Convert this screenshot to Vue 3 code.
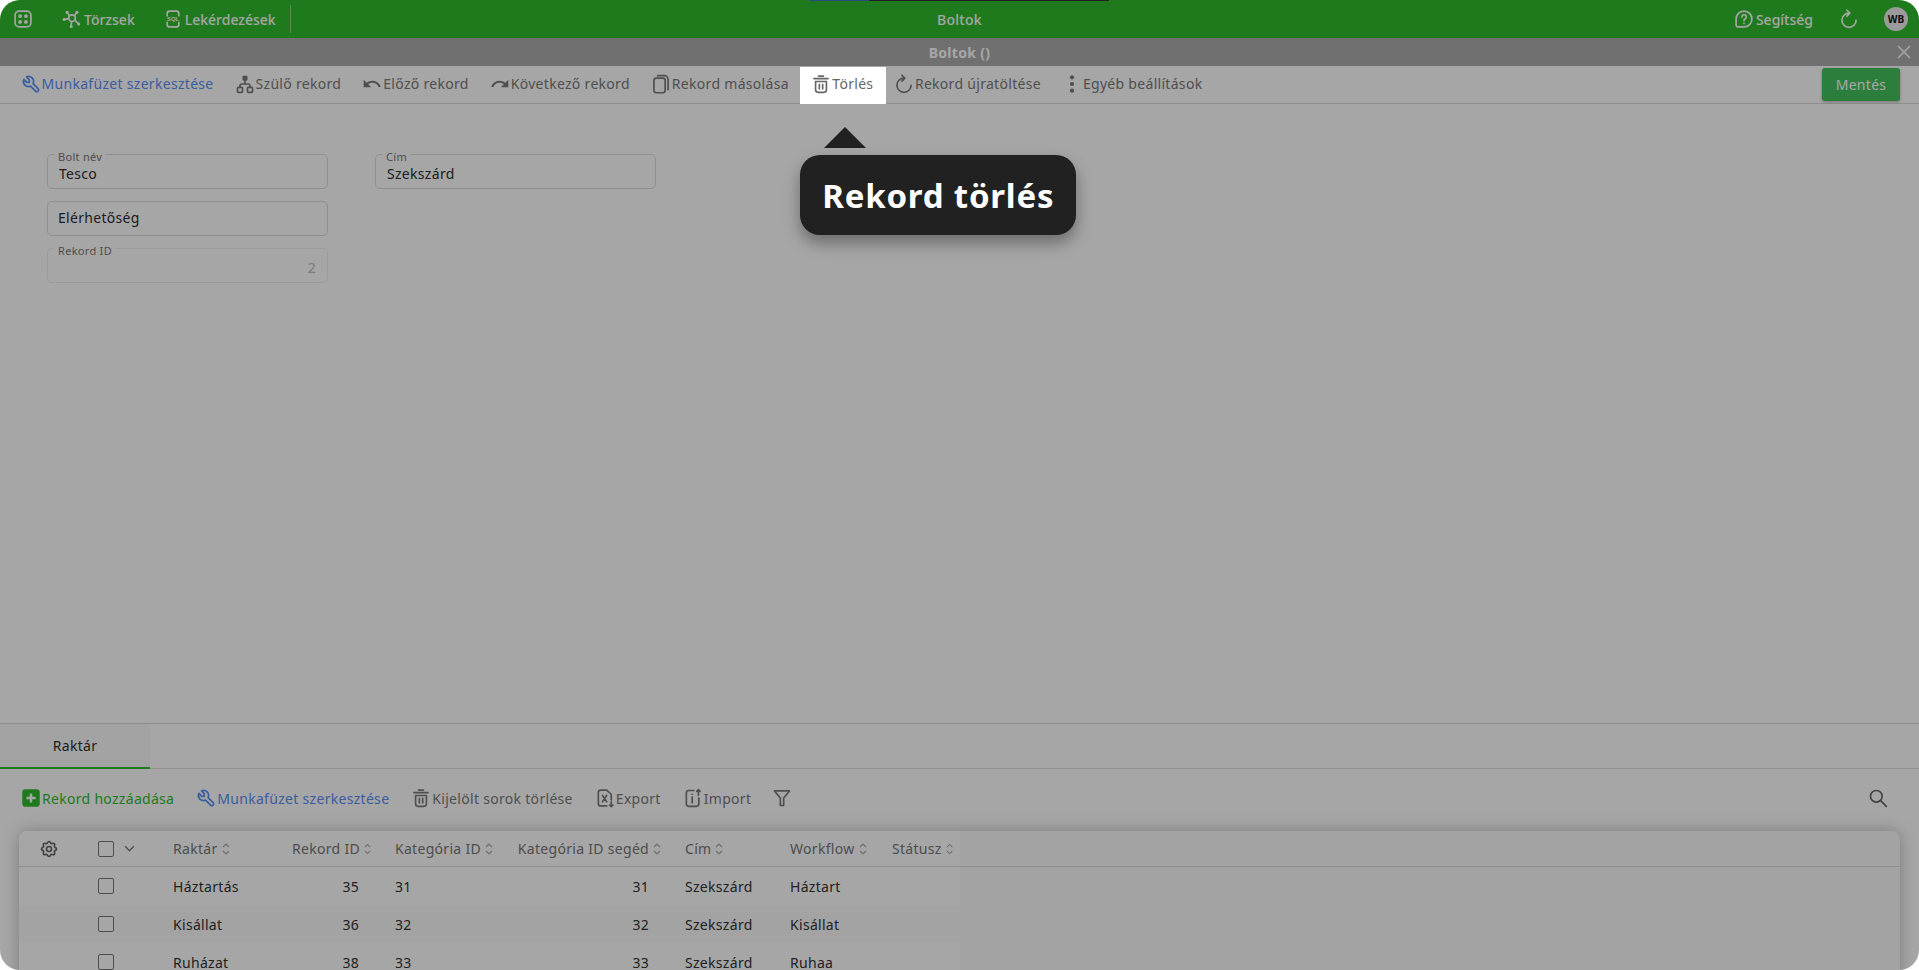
<template>
  <div class="app">
    <header class="topbar">
      <div class="progress"><span></span></div>
      <div class="top-left">
        <svg class="ic apps" viewBox="0 0 24 24" v-html="icons.apps"></svg>
        <a class="top-link"><svg class="ic" viewBox="0 0 24 24" v-html="icons.hub"></svg>Törzsek</a>
        <a class="top-link"><svg class="ic" viewBox="0 0 24 24" v-html="icons.sql"></svg>Lekérdezések</a>
        <i class="top-sep"></i>
      </div>
      <div class="top-title">Boltok</div>
      <div class="top-right">
        <a class="top-link"><svg class="ic" viewBox="0 0 24 24" v-html="icons.help"></svg>Segítség</a>
        <svg class="ic reload" viewBox="0 0 24 24" v-html="icons.reload"></svg>
        <span class="avatar">WB</span>
      </div>
    </header>

    <div class="titlebar">
      <span>Boltok ()</span>
      <svg class="close" viewBox="0 0 14 14"><path d="M1 1l12 12M13 1L1 13" /></svg>
    </div>

    <nav class="toolbar">
      <button
        v-for="item in formTools"
        :key="item.label"
        class="tool"
        :class="[item.cls, { spot: item.spot }]"
      >
        <svg class="ic" viewBox="0 0 24 24" v-html="icons[item.icon]"></svg>{{ item.label }}
        <div v-if="item.spot" class="tip">
          <i class="tip-arrow"></i>
          <div class="tip-body">Rekord törlés</div>
        </div>
      </button>
      <button class="save">Mentés</button>
    </nav>

    <main class="form">
      <div class="form-col">
        <div class="field"><label>Bolt név</label><span>Tesco</span></div>
        <div class="field empty"><span>Elérhetőség</span></div>
        <div class="field disabled"><label>Rekord ID</label><span>2</span></div>
      </div>
      <div class="form-col">
        <div class="field"><label>Cím</label><span>Szekszárd</span></div>
      </div>
    </main>

    <section class="sub">
      <div class="tabs"><div class="tab">Raktár</div></div>
      <div class="sub-tools">
        <button v-for="item in gridTools" :key="item.label" class="tool" :class="item.cls">
          <svg class="ic" viewBox="0 0 24 24" v-html="icons[item.icon]"></svg>{{ item.label }}
        </button>
        <button class="tool filter"><svg class="ic" viewBox="0 0 24 24" v-html="icons.filter"></svg></button>
        <svg class="ic search" viewBox="0 0 24 24" v-html="icons.search"></svg>
      </div>
      <div class="card">
        <div class="row head">
          <div class="cell"><svg class="ic gear" viewBox="0 0 24 24" v-html="icons.gear"></svg></div>
          <div class="cell">
            <i class="check"></i>
            <svg class="chev" viewBox="0 0 10 6"><path d="M1 1l4 4 4-4" /></svg>
          </div>
          <div v-for="col in columns" :key="col.label" class="cell" :class="{ num: col.num }">
            {{ col.label }}
            <svg class="sort" viewBox="0 0 8 14"><path d="M1 5l3-3 3 3M1 9l3 3 3-3" /></svg>
          </div>
        </div>
        <div v-for="(r, i) in rows" :key="r.id" class="row" :class="{ odd: i % 2 === 1 }">
          <div class="cell"></div>
          <div class="cell"><i class="check"></i></div>
          <div class="cell">{{ r.name }}</div>
          <div class="cell num">{{ r.id }}<b class="sort-pad"></b></div>
          <div class="cell">{{ r.cat }}</div>
          <div class="cell num">{{ r.cat }}<b class="sort-pad"></b></div>
          <div class="cell">{{ r.addr }}</div>
          <div class="cell">{{ r.wf }}</div>
          <div class="cell"></div>
        </div>
      </div>
    </section>

    <div class="dim"></div>
  </div>
</template>

<script setup>
const line = 'fill="none" stroke="currentColor" stroke-width="2" stroke-linecap="round" stroke-linejoin="round"'

const icons = {
  apps: `<rect x="2.500" y="2.500" width="19" height="19" rx="5" ${line}/><circle cx="8.500" cy="8.500" r="2.300" fill="currentColor"/><circle cx="15.500" cy="8.500" r="2.300" fill="currentColor"/><circle cx="8.500" cy="15.500" r="2.300" fill="currentColor"/><circle cx="15.500" cy="15.500" r="2.300" fill="currentColor"/>`,
  hub: `<circle cx="12" cy="11" r="4" ${line}/><path d="M9 8L6.500 4.500M15 8l2.500-3.500M8 11.500L3 12.500M11.500 15l-.5 5M15.500 13.500l3.500 3.500" ${line} stroke-width="1.500"/><circle cx="6" cy="4" r="1.800" fill="currentColor"/><circle cx="18" cy="4" r="1.800" fill="currentColor"/><circle cx="2.500" cy="12.500" r="1.800" fill="currentColor"/><circle cx="11" cy="21" r="1.800" fill="currentColor"/><circle cx="20" cy="18" r="1.800" fill="currentColor"/>`,
  sql: `<path d="M5 8V5.500A3 3 0 0 1 8 2.500h8a3 3 0 0 1 3 3V8M5 16v2.500a3 3 0 0 0 3 3h8a3 3 0 0 0 3-3V16" ${line}/><text x="12" y="14.500" text-anchor="middle" font-size="7" font-weight="700" font-family="Liberation Sans, sans-serif" fill="currentColor">SQL</text>`,
  help: `<path d="M12 2.500a9.500 9.500 0 0 1 0 19H5a2.500 2.500 0 0 1-2.500-2.500V12A9.500 9.500 0 0 1 12 2.500z" ${line} stroke-width="1.600"/><path d="M9.500 9.500a2.600 2.600 0 1 1 3.900 2.300c-.9.500-1.400 1.100-1.400 2.200" ${line} stroke-width="1.600"/><circle cx="12" cy="17.300" r="1.100" fill="currentColor"/>`,
  reload: `<path d="M12 5A8.500 8.500 0 1 0 20.500 13.500" ${line} stroke-width="1.800"/><path d="M9.500 1.500L13 5 9.500 8.500" ${line} stroke-width="1.800"/>`,
  tool: `<path d="M7 10h3V7L6.500 3.500a6 6 0 0 1 8 8l6 6a2 2 0 0 1-3 3l-6-6a6 6 0 0 1-8-8L7 10" ${line} stroke-width="2.200"/>`,
  tree: `<rect x="9" y="2" width="6" height="6" rx="1" fill="currentColor"/><rect x="3" y="16" width="6" height="6" rx="1" ${line}/><rect x="15" y="16" width="6" height="6" rx="1" ${line}/><path d="M6 16v-2a2 2 0 0 1 2-2h8a2 2 0 0 1 2 2v2M12 8v4" ${line}/>`,
  undo: `<path fill="currentColor" d="M12.500 8c-2.650 0-5.050.99-6.900 2.600L2 7v9h9l-3.620-3.620c1.390-1.160 3.160-1.880 5.120-1.880 3.540 0 6.550 2.310 7.600 5.500l2.370-.78C21.080 11.030 17.150 8 12.500 8z"/>`,
  redo: `<path fill="currentColor" d="M18.400 10.600C16.550 8.990 14.150 8 11.500 8c-4.650 0-8.580 3.030-9.960 7.220L3.900 16c1.050-3.190 4.050-5.500 7.600-5.500 1.950 0 3.730.72 5.120 1.880L13 16h9V7l-3.600 3.600z"/>`,
  copy: `<rect x="3.500" y="5" width="13.500" height="17.500" rx="3" ${line}/><path d="M8 2h8a4.500 4.500 0 0 1 4.500 4.500V19" ${line}/>`,
  trash: `<path d="M3.500 5.500h17" ${line} stroke-width="2.600"/><path d="M9 2.500h6" ${line}/><path d="M5.500 9h13v10a3 3 0 0 1-3 3h-7a3 3 0 0 1-3-3z" ${line}/><path d="M10 12.500v5.500M14 12.500v5.500" ${line}/>`,
  dots: `<circle cx="12" cy="4" r="2.500" fill="currentColor"/><circle cx="12" cy="12" r="2.500" fill="currentColor"/><circle cx="12" cy="20" r="2.500" fill="currentColor"/>`,
  plus: `<rect x="1.500" y="1.500" width="21" height="21" rx="4" fill="currentColor"/><path d="M12 6.500v11M6.500 12h11" fill="none" stroke="#fff" stroke-width="3"/>`,
  excel: `<path d="M14 21.500H7a3 3 0 0 1-3-3v-13a3 3 0 0 1 3-3h7l5.500 5v7" ${line}/><path d="M9 9l5 7.500M14 9l-5 7.500" ${line}/><path d="M19.500 16.500v6M17.500 20.500l2 2 2-2" ${line}/>`,
  info: `<path d="M13 3H7a3 3 0 0 0-3 3v13a3 3 0 0 0 3 3h9a3 3 0 0 0 3-3v-7" ${line}/><path d="M11 11v7M11 7.500v.1" ${line} stroke-width="2.400"/><path d="M18.500 9V2M16.500 4l2-2 2 2" ${line}/>`,
  filter: `<path d="M3 3.500h18l-7 8.500v9h-4v-9z" ${line}/>`,
  search: `<circle cx="10" cy="10" r="7" ${line}/><path d="M15.500 15.500L22 22" ${line} stroke-width="2.400"/>`,
  gear: `<path d="M10.325 4.317c.426-1.756 2.924-1.756 3.350 0a1.724 1.724 0 0 0 2.573 1.066c1.543-.94 3.310.826 2.370 2.370a1.724 1.724 0 0 0 1.065 2.572c1.756.426 1.756 2.924 0 3.350a1.724 1.724 0 0 0-1.066 2.573c.94 1.543-.826 3.310-2.370 2.370a1.724 1.724 0 0 0-2.572 1.065c-.426 1.756-2.924 1.756-3.350 0a1.724 1.724 0 0 0-2.573-1.066c-1.543.94-3.310-.826-2.370-2.370a1.724 1.724 0 0 0-1.065-2.572c-1.756-.426-1.756-2.924 0-3.350a1.724 1.724 0 0 0 1.066-2.573c-.94-1.543.826-3.310 2.370-2.370 1 .608 2.296.07 2.572-1.065z" ${line}/><circle cx="12" cy="12" r="3" ${line}/>`,
}

const formTools = [
  { label: 'Munkafüzet szerkesztése', icon: 'tool', cls: 'blue' },
  { label: 'Szülő rekord', icon: 'tree' },
  { label: 'Előző rekord', icon: 'undo' },
  { label: 'Következő rekord', icon: 'redo' },
  { label: 'Rekord másolása', icon: 'copy' },
  { label: 'Törlés', icon: 'trash', spot: true },
  { label: 'Rekord újratöltése', icon: 'reload' },
  { label: 'Egyéb beállítások', icon: 'dots' },
]

const gridTools = [
  { label: 'Rekord hozzáadása', icon: 'plus', cls: 'green' },
  { label: 'Munkafüzet szerkesztése', icon: 'tool', cls: 'blue' },
  { label: 'Kijelölt sorok törlése', icon: 'trash' },
  { label: 'Export', icon: 'excel' },
  { label: 'Import', icon: 'info' },
]

const columns = [
  { label: 'Raktár' },
  { label: 'Rekord ID', num: true },
  { label: 'Kategória ID' },
  { label: 'Kategória ID segéd', num: true },
  { label: 'Cím' },
  { label: 'Workflow' },
  { label: 'Státusz' },
]

const rows = [
  { name: 'Háztartás', id: 35, cat: 31, addr: 'Szekszárd', wf: 'Háztart' },
  { name: 'Kisállat', id: 36, cat: 32, addr: 'Szekszárd', wf: 'Kisállat' },
  { name: 'Ruházat', id: 38, cat: 33, addr: 'Szekszárd', wf: 'Ruhaa' },
]
</script>

<style>
html, body { margin: 0; background: #fff; }
</style>

<style scoped>
.app {
  position: relative;
  display: flex;
  flex-direction: column;
  height: 970px;
  overflow: hidden;
  border-radius: 20px;
  background: #fff;
  font-family: "Noto Sans", sans-serif;
  font-size: 14px;
  letter-spacing: 0.3px;
  color: #7a7a7a;
}
.dim {
  position: absolute;
  inset: 0;
  z-index: 10;
  background: rgba(0, 0, 0, 0.35);
}
.ic { width: 20px; height: 20px; flex: none; }

.topbar {
  position: relative;
  flex: none;
  display: flex;
  align-items: center;
  justify-content: space-between;
  height: 38px;
  background: #31bc2e;
  color: #fff;
}
.progress {
  position: absolute;
  top: 0;
  left: 809px;
  width: 300px;
  height: 1px;
  background: #333;
}
.progress span { display: block; width: 60px; height: 1px; background: #3a78c8; }
.top-left, .top-right { display: flex; align-items: center; }
.top-left { padding-left: 13px; }
.apps { margin-right: 29px; }
.top-link { display: flex; align-items: center; gap: 2px; margin-right: 28px; font-weight: 500; letter-spacing: 0; }
.top-sep { width: 1px; height: 28px; background: rgba(255, 255, 255, 0.4); margin-left: -14px; }
.top-title {
  position: absolute;
  left: 0;
  right: 0;
  text-align: center;
  font-weight: 500;
  pointer-events: none;
}
.top-right { padding-right: 11px; }
.top-right .top-link { margin-right: 26px; }
.reload { margin-right: 25px; }
.avatar {
  display: flex;
  align-items: center;
  justify-content: center;
  width: 24px;
  height: 24px;
  border-radius: 50%;
  background: #eee;
  color: #111;
  font-size: 10px;
  font-weight: 700;
  letter-spacing: 0;
}

.titlebar {
  position: relative;
  flex: none;
  display: flex;
  align-items: center;
  justify-content: center;
  height: 28px;
  background: #adadad;
  color: #fff;
  font-weight: 700;
}
.close {
  position: absolute;
  right: 8px;
  top: 7px;
  width: 14px;
  height: 14px;
  fill: none;
  stroke: #fff;
  stroke-width: 1.6;
}

.toolbar {
  flex: none;
  display: flex;
  align-items: center;
  height: 37px;
  padding-left: 10px;
  border-bottom: 1px solid #dcdcdc;
}
.tool {
  display: flex;
  align-items: center;
  gap: 1px;
  height: 100%;
  padding: 0 10.5px;
  border: 0;
  background: none;
  color: inherit;
  font: inherit;
  letter-spacing: inherit;
  white-space: nowrap;
}
.toolbar .tool { margin-top: 1px; padding-bottom: 3px; box-sizing: border-box; }
.sub-tools .tool { padding: 0 11px; }
.blue { color: #5a90f5; }
.green { color: #31bc2e; }
.toolbar .spot {
  position: relative;
  z-index: 11;
  margin-right: -3px;
  margin-left: 1px;
  padding: 0 13px 3px 11px;
  background: #fff;
  color: #666;
}
.tip {
  position: absolute;
  left: 0;
  top: 60px;
  width: 276px;
}
.tip-arrow {
  display: block;
  width: 0;
  margin-left: 24px;
  border: 21px solid transparent;
  border-top: 0;
  border-bottom-color: #212121;
}
.tip-body {
  margin-top: 7px;
  height: 80px;
  box-sizing: border-box;
  padding-top: 2px;
  display: flex;
  align-items: center;
  justify-content: center;
  border-radius: 20px;
  background: #212121;
  box-shadow: 0 8px 16px rgba(0, 0, 0, 0.35);
  color: #fff;
  font-size: 33px;
  font-weight: 700;
  letter-spacing: 0.8px;
}
.save {
  height: 33px;
  width: 78px;
  margin-left: auto;
  margin-right: 19px;
  border: 0;
  border-radius: 3px;
  background: #44c25e;
  box-shadow: 0 1px 3px rgba(0, 0, 0, 0.3);
  color: #fff;
  font: inherit;
  letter-spacing: inherit;
}

.form {
  flex: 1;
  display: flex;
  gap: 47px;
  padding: 50px 0 0 47px;
  color: #2e2e2e;
}
.form-col { display: flex; flex-direction: column; gap: 12px; width: 281px; }
.field {
  position: relative;
  display: flex;
  align-items: flex-end;
  height: 35px;
  box-sizing: border-box;
  padding: 0 11px 5px;
  border: 1px solid #dcdcdc;
  border-radius: 5px;
}
.field label {
  position: absolute;
  left: 6px;
  top: -4px;
  padding: 0 4px;
  background: #fff;
  color: #777;
  font-size: 11px;
  line-height: 11px;
}
.field.empty { align-items: center; padding-bottom: 2px; padding-left: 10px; }
.field.disabled { border-color: #eee; height: 35px; justify-content: flex-end; color: #bbb; }

.sub { flex: none; height: 246px; border-top: 1px solid #dcdcdc; }
.tabs { display: flex; height: 44px; border-bottom: 1px solid #ddd; }
.tab {
  display: flex;
  align-items: center;
  justify-content: center;
  width: 150px;
  border-bottom: 2px solid #31bc2e;
  margin-bottom: -1px;
  background: #fbfbfb;
  color: #2e2e2e;
}
.sub-tools {
  display: flex;
  align-items: center;
  height: 50px;
  margin-top: 4px;
  padding-left: 10px;
}
.sub-tools .filter { margin-left: -1px; }
.search { margin-left: auto; margin-right: 31px; color: #666; }
.card {
  margin: 8px 19px 0;
  border-radius: 8px 8px 0 0;
  background: #fbfbfb;
  box-shadow: 0 0 16px rgba(0, 0, 0, 0.25);
  height: 200px;
}
.row {
  display: grid;
  grid-template-columns: 66px 75px 119px 103px 122px 168px 105px 102px 81px;
  width: 941px;
  height: 38px;
  color: #333;
  background: #fff;
}
.row.odd { background: none; }
.row.head {
  width: auto;
  height: 36px;
  border-bottom: 1px solid #dcdcdc;
  box-sizing: border-box;
  background: linear-gradient(#fff, #fff) no-repeat 0 0 / 941px 100%;
  color: #777;
  border-radius: 8px 8px 0 0;
}
.cell {
  display: flex;
  align-items: center;
  gap: 4px;
  padding: 0 7px 0 13px;
  white-space: nowrap;
}
.cell.num { justify-content: flex-end; padding-right: 11px; }
.gear { margin-left: 7px; color: #666; }
.check {
  display: block;
  width: 14px;
  height: 14px;
  border: 1px solid #777;
  border-radius: 2px;
  background: #fff;
}
.chev {
  width: 11px;
  height: 7px;
  margin-left: 6px;
  fill: none;
  stroke: #777;
  stroke-width: 1.2;
}
.sort { width: 8px; height: 14px; fill: none; stroke: #aaa; stroke-width: 1.2; }
.sort-pad { width: 8px; }
</style>
